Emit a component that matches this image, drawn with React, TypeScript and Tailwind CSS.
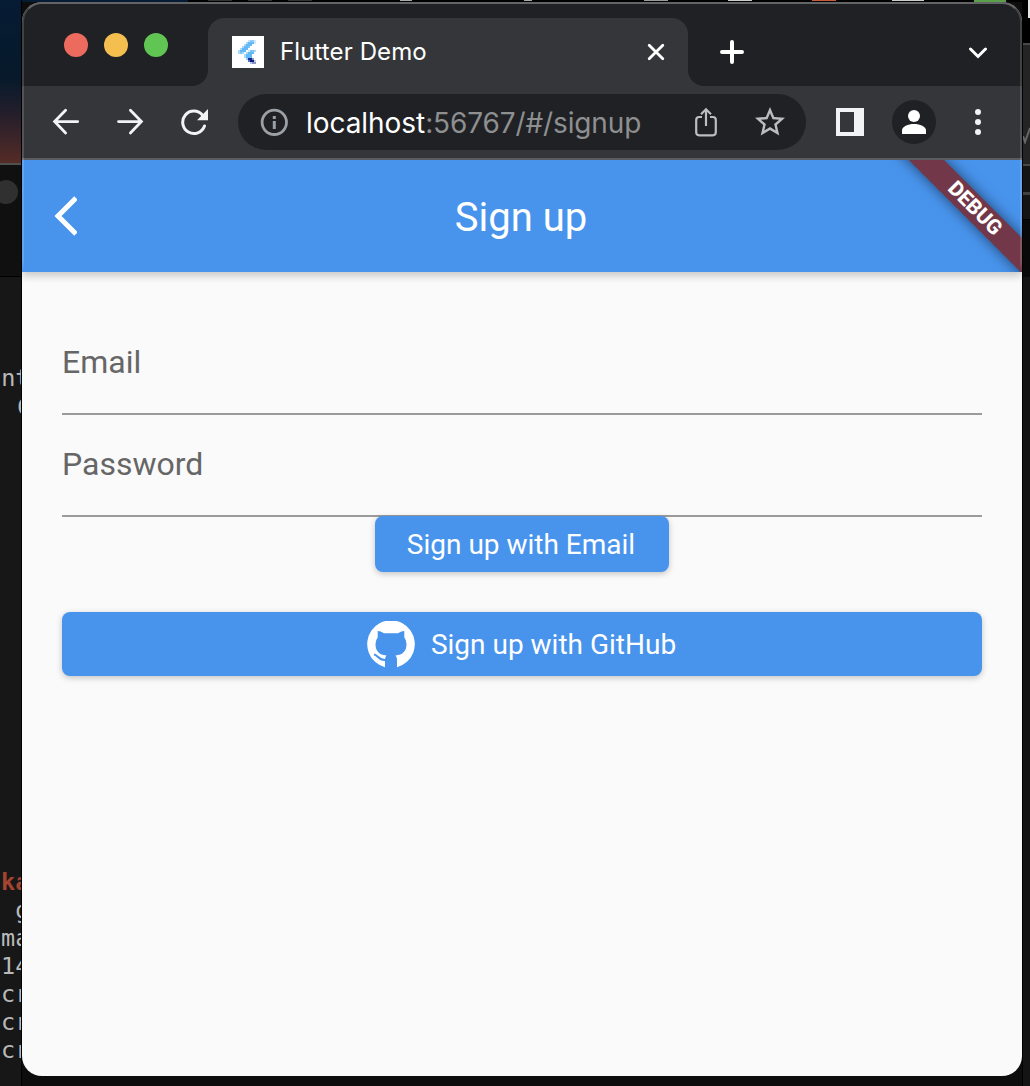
import React from "react";

const ink = "#f1f3f4";

/* Runs of the favicon's pixel grid: x, y, width, colour (16x16 units). */
const favicon: [number, number, number, string][] = [
  [8, 2, 1, "#c5e5fb"], [9, 2, 2, "#8fcdf6"], [11, 2, 1, "#d0eafc"],
  [7, 3, 1, "#a9daf9"], [8, 3, 3, "#62b9f3"], [11, 3, 1, "#d0eafc"],
  [6, 4, 1, "#a9daf9"], [7, 4, 3, "#62b9f3"],
  [5, 5, 1, "#a9daf9"], [6, 5, 2, "#62b9f3"], [8, 5, 1, "#7cc5f5"],
  [4, 6, 1, "#a9daf9"], [5, 6, 3, "#62b9f3"],
  [3, 7, 1, "#a9daf9"], [4, 7, 3, "#62b9f3"], [8, 7, 1, "#d0eafc"], [9, 7, 2, "#7cc5f5"], [11, 7, 1, "#a9daf9"],
  [3, 8, 1, "#a9daf9"], [4, 8, 1, "#7cc5f5"], [5, 8, 1, "#a9daf9"], [7, 8, 1, "#a9daf9"], [8, 8, 3, "#62b9f3"],
  [6, 9, 1, "#a9daf9"], [7, 9, 3, "#62b9f3"],
  [6, 10, 1, "#a9daf9"], [7, 10, 3, "#62b9f3"],
  [7, 11, 1, "#8fcdf6"], [8, 11, 2, "#13298f"], [10, 11, 1, "#8a97c4"],
  [8, 12, 1, "#5b76bd"], [9, 12, 2, "#0b1a80"], [11, 12, 1, "#c5cde4"],
  [9, 13, 1, "#b6c3dd"], [10, 13, 2, "#8a97c4"],
];

function Favicon() {
  return (
    <svg className="ml-6 size-8 bg-white" viewBox="0 0 16 16" shapeRendering="crispEdges">
      {favicon.map(([x, y, w, c], i) => (
        <rect key={i} x={x} y={y} width={w} height={1} fill={c} />
      ))}
    </svg>
  );
}

function TabStrip() {
  return (
    <div className="flex h-[84px] shrink-0 items-end bg-[#202124]">
      <div className="mb-[29px] ml-[42px] flex w-[128px] gap-4">
        <span className="size-6 rounded-full bg-[#ed6a5e]" />
        <span className="size-6 rounded-full bg-[#f5bf4f]" />
        <span className="size-6 rounded-full bg-[#61c554]" />
      </div>
      <svg className="size-4" viewBox="0 0 16 16"><path d="M16 0V16H0A16 16 0 0 0 16 0Z" fill="#35363a" /></svg>
      <div className="flex h-[68px] w-[480px] items-center rounded-t-[16px] bg-[#35363a]">
        <Favicon />
        <span className="ml-4 whitespace-nowrap text-[24px] leading-8 tracking-[0.1px] text-white">Flutter Demo</span>
        <svg className="mr-[23px] ml-auto size-[18px]" viewBox="0 0 18 18" fill="none" stroke="#fff" strokeWidth="2.8" strokeLinecap="round">
          <path d="M2.2 2.2 15.8 15.8M15.8 2.2 2.2 15.8" />
        </svg>
      </div>
      <svg className="size-4" viewBox="0 0 16 16"><path d="M0 0V16H16A16 16 0 0 1 0 0Z" fill="#35363a" /></svg>
      <svg className="mb-[22px] ml-4 size-6" viewBox="0 0 24 24" fill="none" stroke="#fff" strokeWidth="4" strokeLinecap="round">
        <path d="M12 2V22M2 12H22" />
      </svg>
      <svg className="mr-[34px] mb-[27px] ml-auto h-3 w-5" viewBox="0 0 20 12" fill="none" stroke="#fff" strokeWidth="3" strokeLinecap="round">
        <path d="M2.5 2 10 9.5 17.5 2" />
      </svg>
    </div>
  );
}

function Toolbar() {
  return (
    <div className="flex h-[74px] shrink-0 items-center border-b-2 border-[#5d5e62] bg-[#35363a]">
      <svg className="ml-[30px] h-[28px] w-[28px]" viewBox="0 0 28 28" fill="none" stroke={ink} strokeWidth="2.8" strokeLinecap="round">
        <path d="M2.8 13.6H25.7M13.6 2.3 2.6 13.6 13.6 24.9" />
      </svg>
      <svg className="ml-9 h-[28px] w-[28px]" viewBox="0 0 28 28" fill="none" stroke={ink} strokeWidth="2.8" strokeLinecap="round">
        <path d="M2.5 13.6H25.2M14.4 2.3 25.4 13.6 14.4 24.9" />
      </svg>
      <svg className="ml-9 h-[28px] w-[28px]" viewBox="0 0 28 28">
        <path d="M22.6 7.2A11.2 11.2 0 1 0 24.5 18" fill="none" stroke={ink} strokeWidth="3" strokeLinecap="round" />
        <path d="M28 1V12.3H17Z" fill={ink} />
      </svg>
      <div className="ml-[30px] flex h-14 w-[568px] items-center rounded-full bg-[#202124]">
        <svg className="ml-[22px] size-7" viewBox="0 0 28 28">
          <circle cx="14.3" cy="14.3" r="12.2" fill="none" stroke="#9aa0a6" strokeWidth="2.8" />
          <path d="M12.8 8h3v3h-3zM12.8 13h3v8h-3z" fill="#9aa0a6" />
        </svg>
        <span className="mt-px ml-[18px] whitespace-nowrap text-[28px] leading-9 tracking-[-0.13px] text-[#8e8f91]">
          <span className="tracking-[-0.05px] text-white">localhost</span>:56767/#/signup
        </span>
        <svg className="mr-[34px] ml-auto h-[30px] w-6" viewBox="0 0 24 30" fill="none" stroke="#bdbdbf" strokeWidth="2.2">
          <path d="M8 10H5.2A3 3 0 0 0 2.2 13V25.3A3 3 0 0 0 5.2 28.3H18.8A3 3 0 0 0 21.8 25.3V13A3 3 0 0 0 18.8 10H16M12 19V2.5M7 7.3 12 2.3 17 7.3" />
        </svg>
        <svg className="mr-[18px] size-9" viewBox="0 0 24 24" fill="#bdbdbf">
          <path d="M22 9.24l-7.19-.62L12 2 9.19 8.63 2 9.24l5.46 4.73L5.82 21 12 17.27 18.18 21l-1.63-7.03L22 9.24zM12 15.4l-3.76 2.27 1-4.28-3.32-2.88 4.38-.38L12 6.1l1.71 4.04 4.38.38-3.32 2.88 1 4.28L12 15.4z" />
        </svg>
      </div>
      <div className="ml-[30px] h-7 w-7 border-4 border-r-[10px] border-[#f1f3f4]" />
      <div className="ml-7 flex size-11 items-center justify-center rounded-full bg-[#202124]">
        <svg className="h-6 w-6" viewBox="0 0 24 24" fill="#fff">
          <circle cx="12" cy="6" r="6" />
          <path d="M0 24V20.5C0 16.5 6 14 12 14S24 16.5 24 20.5V24Z" />
        </svg>
      </div>
      <div className="ml-[39px] flex flex-col gap-1">
        <span className="size-1.5 rounded-full bg-[#f1f3f4]" />
        <span className="size-1.5 rounded-full bg-[#f1f3f4]" />
        <span className="size-1.5 rounded-full bg-[#f1f3f4]" />
      </div>
    </div>
  );
}

function AppBar() {
  return (
    <header className="relative z-10 flex h-28 shrink-0 items-center justify-center bg-[#4894ed] shadow-[0_4px_8px_rgba(0,0,0,0.2)]">
      <svg className="absolute top-9 left-[31px] h-10 w-6" viewBox="0 0 24 40" fill="none" stroke="#fff" strokeWidth="5">
        <path d="M23 2 5 20 23 38" />
      </svg>
      <h1 className="mt-1 mr-0.5 text-[40px] leading-[48px] text-white">Sign up</h1>
      <div className="absolute top-0 right-0 size-28 [clip-path:inset(0_0_0_-60px)]">
        <div className="absolute top-[36px] left-[-45px] flex h-[24.5px] w-[220px] rotate-45 items-center justify-center bg-[#723849] text-[20.8px] leading-none font-extrabold text-white shadow-[0_0_14px_rgba(0,0,0,0.55)]">
          DEBUG
        </div>
      </div>
    </header>
  );
}

function Field({ label }: { label: string }) {
  return (
    <div className="h-[102px] border-b-2 border-[#9b9b9b] pt-[30px] text-[32px] leading-[38px] text-[#666]">{label}</div>
  );
}

function Octocat() {
  return (
    <svg className="mt-0.5 size-12" viewBox="0 0 48 48">
      <path d="M18 46.2A23.8 23.8 0 1 1 30 46.2V38.500Q30 36 28.500 34.500C36 33.800 39.500 30 39.500 23Q39.500 19 37.300 16.500V10Q34.500 10 31 12.300H17Q13.500 10 10.700 10V16.500Q8.500 19 8.500 23C8.500 30 12 33.800 19.500 34.500Q18 36 18 38.500Z" fill="#fff" />
      <path d="M7 33.500C11 33.800 11.200 39.600 18.500 39" fill="none" stroke="#4894ed" strokeWidth="2" />
    </svg>
  );
}

function TerminalStrip() {
  return (
    <div className="flex w-[22px] shrink-0 flex-col overflow-hidden border-r border-black bg-[#171717] font-['DejaVu_Sans_Mono','Liberation_Mono',monospace] text-[23.5px] leading-7 text-[#b9b9b9]">
      <div className="h-[163px] shrink-0 bg-[linear-gradient(#061b34_0%,#071a2b_48%,#241e2b_70%,#552b26_100%)]" />
      <div className="h-[114px] shrink-0 border-t-2 border-b border-t-[#505050] border-b-black bg-[#101010] pt-[15px]">
        <div className="-ml-1.5 size-6 rounded-full bg-[#303030]" />
      </div>
      <pre className="mt-[87px] -ml-[13px] shrink-0 font-[inherit]">Unt</pre>
      <pre className="mt-px ml-[17px] shrink-0 font-[inherit]">C</pre>
      <pre className="mt-[447px] ml-[1px] shrink-0 font-[inherit]">
        <b className="text-[#a4432f]">ka</b>{"\n g\nma\n14\ncr\ncr\ncr"}
      </pre>
    </div>
  );
}

export default function App() {
  return (
    <div className="flex h-[1086px] w-[1030px] overflow-hidden bg-[#131313]">
      <TerminalStrip />
      <div className="flex w-[1000px] shrink-0 flex-col bg-[#0d0d0d]">
        <div className="flex h-0.5 shrink-0 bg-black">
          <div className="h-full w-[166px] bg-[#061b34]" />
          <div className="ml-[20px] h-px w-6 bg-[#333]" />
          <div className="ml-4 h-px w-6 bg-[#333]" />
          <div className="ml-4 h-px w-6 bg-[#333]" />
          <div className="ml-[88px] h-px w-3 bg-[#aaa]" />
          <div className="ml-[112px] h-px w-2 bg-[#aaa]" />
          <div className="ml-[112px] h-px w-6 bg-[#999]" />
          <div className="ml-[60px] h-px w-6 bg-[#ccc]" />
          <div className="ml-[60px] h-px w-6 bg-[#c75b3b]" />
          <div className="ml-[56px] h-px w-8 bg-[#ccc]" />
          <div className="ml-[50px] h-0.5 w-8 bg-[#5a9f4a]" />
        </div>
        <main className="relative flex h-[1074px] shrink-0 flex-col overflow-hidden rounded-[20px] bg-[#fafafa] font-['Inter',sans-serif]">
          <TabStrip />
          <Toolbar />
          <section className="flex flex-1 flex-col font-['Roboto',sans-serif]">
            <AppBar />
            <form className="flex flex-col px-10 pt-[41px]">
              <Field label="Email" />
              <Field label="Password" />
              <button type="button" className="-mt-px h-14 w-[294px] self-center rounded-lg bg-[#4894ed] pt-0.5 pr-0.5 text-[28px] leading-8 text-white shadow-[0_2px_6px_rgba(0,0,0,0.22)]">
                Sign up with Email
              </button>
              <button type="button" className="mt-10 flex h-16 items-center justify-center gap-4 rounded-lg bg-[#4894ed] pr-px text-[28px] leading-8 text-white shadow-[0_2px_6px_rgba(0,0,0,0.22)]">
                <Octocat />
                <span className="mt-0.5">Sign up with GitHub</span>
              </button>
            </form>
          </section>
          <div className="pointer-events-none absolute inset-x-0 top-0 z-20 h-[270px] rounded-t-[20px] border-x-2 border-t-2 border-x-white/15 border-t-white/30 [mask-image:linear-gradient(#000_96%,transparent)]" />
        </main>
      </div>
      <div className="flex flex-1 flex-col border-l border-black bg-[#141414]">
        <div className="h-[43px] shrink-0 bg-black pl-[5px]"><div className="h-[18px] bg-[#e5e5e5]" /></div>
        <div className="flex h-[121px] shrink-0 items-end border-t-2 border-[#484848] bg-[#242424] pb-[20px]">
          <svg className="h-5 w-[7px]" viewBox="0 0 7 20" fill="none" stroke="#666" strokeWidth="2"><path d="M0 12 2 18 7 4" /></svg>
        </div>
        <div className="h-7 shrink-0 border-t-2 border-[#484848] bg-[#141414]" />
        <div className="h-7 shrink-0 border-t-[3px] border-b border-t-[#404040] border-b-black bg-[#141414]" />
        <div className="h-[57px] shrink-0 bg-[#090909]" />
      </div>
    </div>
  );
}
